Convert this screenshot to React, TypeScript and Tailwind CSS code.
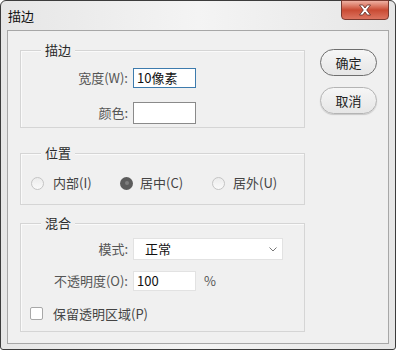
import React from 'react';

function Group({ title, className, children }: { title: string; className: string; children: React.ReactNode }) {
    return (
        <div className={`relative border border-[#d5d5d5] shadow-[inset_1px_1px_0_#fafafa] ${className}`}>
            {/* legend sits on the top border */}
            <span className="absolute left-[20px] top-[-10px] bg-[#f0f0f0] px-[4px] text-[13px] leading-[18px] text-[#2a2a2a]">
                {title}
            </span>
            {children}
        </div>
    );
}

function Radio({ checked }: { checked?: boolean }) {
    if (checked) {
        return (
            <span className="flex h-[13px] w-[13px] items-center justify-center rounded-full bg-[#5c5c5c]">
                <span className="h-[4px] w-[4px] rounded-full bg-[#7e7e7e]" />
            </span>
        );
    }
    return <span className="h-[13px] w-[13px] rounded-full border border-[#c4c4c4] bg-gradient-to-b from-[#ececec] to-[#fafafa]" />;
}

export default function App() {
    return (
        <div className="h-[352px] w-[396px] bg-white font-['Noto_Sans_CJK_SC',sans-serif] text-[#333]">
            <div className="flex h-[350px] w-[396px] flex-col rounded-t-[6px] rounded-b-[3px] border border-[#3c3c3c] bg-gradient-to-r from-[#e6e6e6] via-[#f4f4f4] to-[#e6e6e6]">
                {/* Title bar */}
                <div className="flex h-[29px] items-start justify-between">
                    <span className="pl-[7px] pt-[5px] text-[13px] leading-[20px] text-[#111]">描边</span>
                    <button className="mr-[6px] -mt-px flex h-[20px] w-[48px] items-center justify-center rounded-b-[4px] border border-[#7a3a30] bg-gradient-to-b from-[#eeb0a2] via-[#c94a33] to-[#dc7460]">
                        <svg width="14" height="12" viewBox="0 0 14 12">
                            <path
                                d="M1.5 1h3.2L7 4l2.3-3h3.2L8.7 6l3.8 5H9.3L7 8 4.7 11H1.5l3.8-5z"
                                fill="#fff"
                                stroke="#5a2a22"
                                strokeWidth="0.8"
                                strokeLinejoin="round"
                            />
                        </svg>
                    </button>
                </div>

                {/* Content */}
                <div className="ml-[6px] flex h-[314px] w-[382px] items-start border border-[#a7a7a7] bg-[#f0f0f0] pl-[12px]">
                    <div className="flex w-[285px] flex-col pt-[19px]">
                        <Group title="描边" className="h-[78px] pt-[17px]">
                            <div className="flex h-[20px] items-center">
                                <span className="w-[107px] text-right text-[13px] text-[#555]">宽度(W):</span>
                                <div className="ml-[5px] flex h-[20px] w-[63px] items-center border border-[#3d7bad] bg-white pl-[3px] text-[13px] text-[#111]">
                                    10像素
                                </div>
                            </div>
                            <div className="mt-[14px] flex h-[22px] items-center">
                                <span className="w-[107px] text-right text-[13px] text-[#555]">颜色:</span>
                                <div className="ml-[5px] h-[22px] w-[63px] border border-[#8a8a8a] bg-white" />
                            </div>
                        </Group>

                        <Group title="位置" className="mt-[25px] h-[52px] pt-[22px]">
                            <div className="flex h-[14px] items-center pl-[10px] text-[13px] text-[#444]">
                                <div className="flex w-[89px] items-center gap-[9px]">
                                    <Radio />
                                    <span>内部(I)</span>
                                </div>
                                <div className="flex w-[92px] items-center gap-[7px]">
                                    <Radio checked />
                                    <span>居中(C)</span>
                                </div>
                                <div className="flex items-center gap-[8px]">
                                    <Radio />
                                    <span>居外(U)</span>
                                </div>
                            </div>
                        </Group>

                        <Group title="混合" className="mt-[18px] h-[109px] pt-[14px]">
                            <div className="flex h-[22px] items-center">
                                <span className="w-[107px] text-right text-[13px] text-[#555]">模式:</span>
                                <div className="ml-[5px] flex h-[22px] w-[150px] items-center justify-between border border-[#e2e2e2] bg-white pl-[11px] pr-[5px] text-[13px] text-[#111]">
                                    <span>正常</span>
                                    <svg width="8" height="5" viewBox="0 0 8 5">
                                        <path d="M0.5 0.5L4 4l3.5-3.5" fill="none" stroke="#777" strokeWidth="1" />
                                    </svg>
                                </div>
                            </div>
                            <div className="mt-[11px] flex h-[20px] items-center">
                                <span className="w-[107px] text-right text-[13px] text-[#555]">不透明度(O):</span>
                                <div className="ml-[5px] flex h-[20px] w-[63px] items-center border border-[#e2e2e2] bg-white pl-[3px] text-[13px] text-[#111]">
                                    100
                                </div>
                                <span className="ml-[8px] text-[13px] text-[#555]">%</span>
                            </div>
                            <div className="mt-[16px] flex h-[13px] items-center pl-[9px]">
                                <span className="h-[13px] w-[13px] rounded-[2px] border border-[#a8a8a8] bg-white" />
                                <span className="ml-[10px] text-[13px] text-[#444]">保留透明区域(P)</span>
                            </div>
                        </Group>
                    </div>

                    <div className="ml-[15px] flex flex-col pt-[18px]">
                        <button className="h-[27px] w-[57px] rounded-full border border-[#6e6e6e] bg-gradient-to-b from-[#f6f6f6] to-[#e6e6e6] text-[13px] text-[#222]">
                            确定
                        </button>
                        <button className="mt-[11px] h-[27px] w-[57px] rounded-full border border-[#b4b4b4] bg-gradient-to-b from-[#f6f6f6] to-[#e6e6e6] text-[13px] text-[#222] shadow-[0_1px_1px_#c8c8c8]">
                            取消
                        </button>
                    </div>
                </div>
            </div>
        </div>
    );
}
